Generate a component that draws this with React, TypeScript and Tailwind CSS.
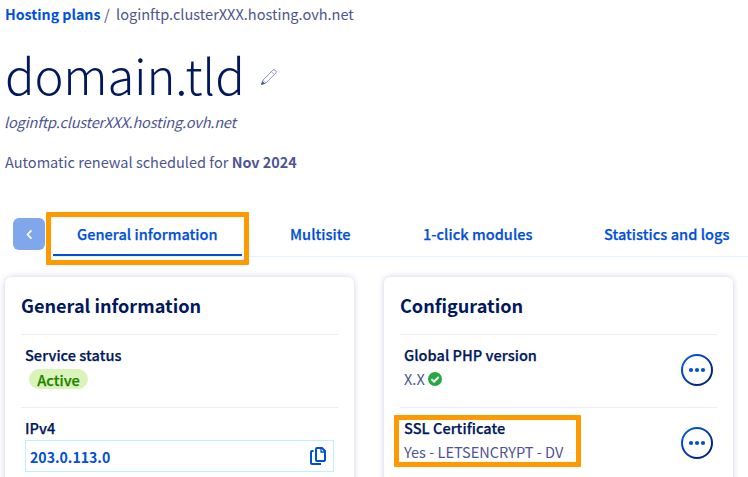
import type { ReactNode } from "react";

function PencilIcon() {
  return (
    <svg className="h-4 w-4" viewBox="0 0 16 16" fill="none" stroke="#6f7bb5" strokeWidth="0.8">
      <path d="M0.6 15.4 1.9 11.2 12 1.1a1.4 1.4 0 0 1 2 0l0.9 0.9a1.4 1.4 0 0 1 0 2L4.8 14.1Z" />
      <path d="M10.4 2.7 13.3 5.6M1.9 11.2 4.8 14.1" stroke="#8a9bd0" />
      <path d="M0.6 15.4 1.5 12.6 3.4 14.5Z" fill="#4d5592" stroke="#4d5592" />
    </svg>
  );
}

function CopyIcon() {
  return (
    <svg className="h-[18px] w-4" viewBox="0 0 16 18" fill="none" stroke="#0050d7" strokeWidth="2">
      <path d="M7 1h5l3 3v9a1 1 0 0 1-1 1H7a1 1 0 0 1-1-1V2a1 1 0 0 1 1-1Z" />
      <path d="M11 1v4h4" strokeWidth="1.3" />
      <path d="M3.5 4H2a1 1 0 0 0-1 1v11a1 1 0 0 0 1 1h9" />
    </svg>
  );
}

function CheckIcon() {
  return (
    <svg className="h-[14px] w-[14px]" viewBox="0 0 14 14">
      <circle cx="7" cy="7" r="7" fill="#27a844" />
      <path d="m3.4 7.1 2.6 2.6 4.7-4.7" fill="none" stroke="#fff" strokeWidth="2" />
    </svg>
  );
}

function MoreButton() {
  return (
    <button className="h-8 w-8 shrink-0" aria-label="Actions">
      <svg className="h-8 w-8" viewBox="0 0 32 32">
        <defs>
          <linearGradient id="ring" x1="0" y1="0" x2="1" y2="1">
            <stop offset="0.2" stopColor="#0050d7" />
            <stop offset="0.8" stopColor="#00257f" />
          </linearGradient>
        </defs>
        <circle cx="16" cy="16" r="15" fill="#fff" stroke="url(#ring)" strokeWidth="2" />
        <g fill="#0050d7">
          <circle cx="10" cy="16" r="2.1" />
          <circle cx="16" cy="16" r="2.1" />
          <circle cx="22" cy="16" r="2.1" />
        </g>
      </svg>
    </button>
  );
}

function Card({ title, children }: { title: string; children: ReactNode }) {
  return (
    <section className="h-[220px] w-[349px] rounded-md bg-white px-4 shadow-[0_0_6px_rgba(0,0,160,0.2)]">
      <h2 className="flex h-[57px] items-center pb-[1px] text-[18.1px] leading-6 font-bold text-[#00185e]">{title}</h2>
      {children}
    </section>
  );
}

function Row({ label, action, children }: { label: string; action?: ReactNode; children: ReactNode }) {
  return (
    <div className="flex h-[73px] justify-between border-t border-[#eeeeee] px-1">
      <div className="flex-1 pt-[8px]">
        <div className="font-medium tracking-[0.03px] text-[#00185e] [-webkit-text-stroke:0.25px]">{label}</div>
        {children}
      </div>
      {action && <div className="pt-[19px]">{action}</div>}
    </div>
  );
}

export default function App() {
  return (
    <div className="relative h-[477px] w-[748px] overflow-hidden bg-white font-['Noto_Sans_CJK_SC','Noto_Sans_CJK_JP',sans-serif] text-[14.55px] leading-6 whitespace-nowrap text-[#4d5592]">
      <nav className="flex h-[26px] items-end pl-[5px]">
        <a className="w-[99px] text-[14.2px] font-bold text-[#0050d7]">Hosting plans</a>
        <span className="w-3">/</span>
        <span>loginftp.clusterXXX.hosting.ovh.net</span>
      </nav>

      <header className="pl-[5px]">
        <div className="flex h-[84px] items-center pt-[18px]">
          <h1 className="w-[256px] pb-[6px] text-[49px] leading-[58px] font-light tracking-[-0.2px] text-[#00185e]">domain.tld</h1>
          <PencilIcon />
        </div>
        <p className="-ml-px tracking-[-0.17px] italic">loginftp.clusterXXX.hosting.ovh.net</p>
        <p className="mt-4">
          Automatic renewal scheduled for <strong className="text-[14.4px] font-bold">Nov 2024</strong>
        </p>
      </header>

      <div className="mt-[44px] flex h-[39px] pl-[13px]">
        <button className="flex h-8 w-8 items-center justify-center rounded-md bg-[#80a7eb]" aria-label="Previous">
          <svg className="h-[11px] w-[7px]" viewBox="0 0 8 12" fill="none" stroke="#fff" strokeWidth="2">
            <path d="M6.2 1.4 1.8 6l4.4 4.6" />
          </svg>
        </button>
        <div className="ml-2 flex flex-1 border-b border-[#def5fd] pt-1 font-medium tracking-[0.03px] text-[#0050d7] [-webkit-text-stroke:0.25px]">
          <a className="h-[34px] w-[189px] border-b-2 border-[#0050d7] pl-6">General information</a>
          <a className="ml-[48px] w-[133px]">Multisite</a>
          <a className="w-[181px]">1-click modules</a>
          <a>Statistics and logs</a>
        </div>
      </div>

      <main className="mt-5 flex gap-[30px] pl-[5px]">
        <Card title="General information">
          <Row label="Service status">
            <span className="mt-[2px] ml-1 flex h-5 w-[59px] items-center justify-center rounded-full bg-[#daf3b9] pt-px font-medium text-[#1f8400] [-webkit-text-stroke:0.25px]">
              Active
            </span>
          </Row>
          <Row label="IPv4">
            <div className="flex h-8 items-center justify-between border border-[#bef1ff] px-[4px] pr-[7px] text-[14.1px] font-bold text-[#0050d7]">
              <span className="pt-px">203.0.113.0</span>
              <CopyIcon />
            </div>
          </Row>
        </Card>
        <Card title="Configuration">
          <Row label="Global PHP version" action={<MoreButton />}>
            <div className="flex items-center gap-[3px]">
              X.X
              <CheckIcon />
            </div>
          </Row>
          <Row label="SSL Certificate" action={<MoreButton />}>
            <div>Yes - LETSENCRYPT - DV</div>
          </Row>
        </Card>
      </main>

      <div className="absolute top-[212px] left-[46px] h-[53px] w-[203px] rounded-[1px] border-5 border-[#ff9900]" />
      <div className="absolute top-[415px] left-[394px] h-[52px] w-[187px] rounded-[1px] border-5 border-[#ff9900]" />
    </div>
  );
}
